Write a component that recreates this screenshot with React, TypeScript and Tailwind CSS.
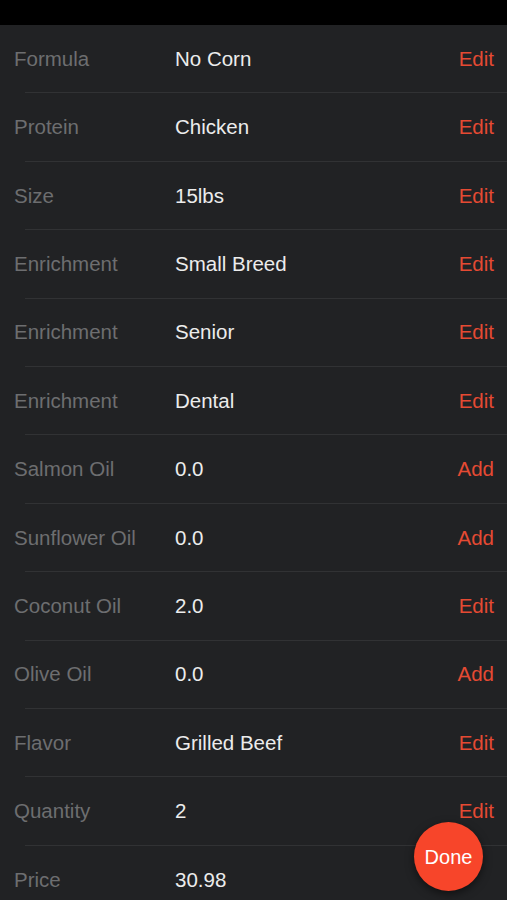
import React from "react";

const rows: { label: string; value: string; action: string }[] = [
  { label: "Formula", value: "No Corn", action: "Edit" },
  { label: "Protein", value: "Chicken", action: "Edit" },
  { label: "Size", value: "15lbs", action: "Edit" },
  { label: "Enrichment", value: "Small Breed", action: "Edit" },
  { label: "Enrichment", value: "Senior", action: "Edit" },
  { label: "Enrichment", value: "Dental", action: "Edit" },
  { label: "Salmon Oil", value: "0.0", action: "Add" },
  { label: "Sunflower Oil", value: "0.0", action: "Add" },
  { label: "Coconut Oil", value: "2.0", action: "Edit" },
  { label: "Olive Oil", value: "0.0", action: "Add" },
  { label: "Flavor", value: "Grilled Beef", action: "Edit" },
  { label: "Quantity", value: "2", action: "Edit" },
  { label: "Price", value: "30.98", action: "" },
];

const App = () => {
  return (
    <div
      className="relative w-[507px] h-[900px] overflow-hidden bg-[#212224] text-[20.5px]"
      style={{ fontFamily: '"Liberation Sans", Arial, sans-serif' }}
    >
      <div className="h-[25px] bg-black" />
      <ul>
        {rows.map((r, i) => (
          <li key={i} className="relative flex items-center h-[68.4px] pl-[14px] pr-[13px]">
            <span className="w-[161px] text-[#6d6e70]">{r.label}</span>
            <span className="flex-1 text-[#ececec]">{r.value}</span>
            {r.action && <span className="text-[#e54a33]">{r.action}</span>}
            <div className="absolute left-[25px] right-0 bottom-0 h-px bg-[#313234]" />
          </li>
        ))}
      </ul>
      <button className="absolute left-[414px] top-[822px] w-[69px] h-[69px] rounded-full bg-[#f7452a] text-white text-[20px] shadow-[0_3px_8px_rgba(0,0,0,0.5)] flex items-center justify-center">
        Done
      </button>
    </div>
  );
};

export default App;
